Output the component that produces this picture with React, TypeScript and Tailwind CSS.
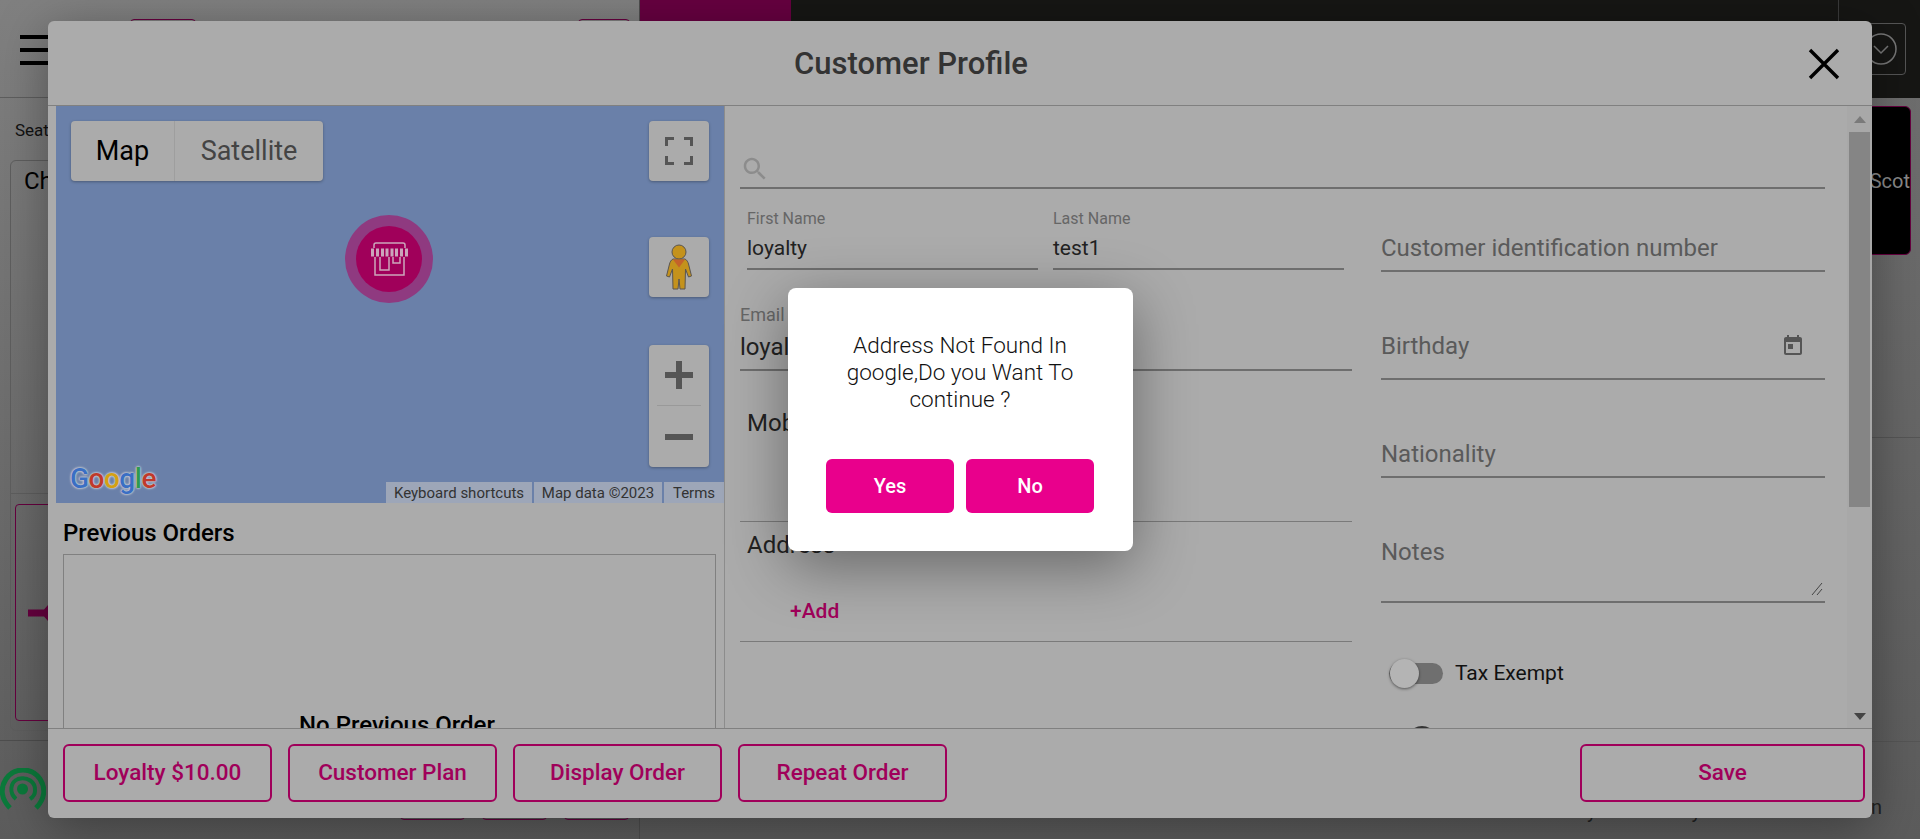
export default function App() {
  const font = { fontFamily: '"Roboto", "Liberation Sans", sans-serif' };
  return (
    <div style={font} className="relative h-[839px] w-full overflow-hidden bg-gradient-to-b from-[#808080] to-[#5c5c5c] font-['Roboto',sans-serif]">
      <Background />
      <Modal />
      <Dialog />
    </div>
  );
}

function Background() {
  return (
    <div className="flex h-full w-full">
      <div className="flex w-[639px] shrink-0 flex-col">
        <div className="flex h-[98px] shrink-0 border-b border-[#5e5e5e]">
          <div className="ml-5 mt-[35px] flex h-[30px] w-[30px] flex-col justify-between">
            <div className="h-[4px] bg-black" />
            <div className="h-[4px] bg-black" />
            <div className="h-[4px] bg-black" />
          </div>
          <div className="ml-[80px] mt-[19px] h-10 w-[66px] rounded border border-[#66003f]" />
          <div className="ml-[382px] mt-[19px] h-10 w-[52px] rounded border border-[#66003f]" />
        </div>
        <div className="shrink-0 pl-[15px] pt-[22px] text-[17px] leading-5 text-[#111]">Seat</div>
        <div className="ml-[10px] mt-[20px] flex h-[571px] w-[500px] shrink-0 flex-col rounded-md border border-[#5e5e5e]">
          <div className="h-[333px] shrink-0 border-b border-[#5e5e5e] pl-[13px] pt-[6px] text-[24px] leading-7 text-black">Ch</div>
          <div className="ml-1 mt-[10px] flex h-[217px] w-[400px] shrink-0 items-center rounded border border-[#66003f] pl-3">
            <svg width="60" height="16" viewBox="0 0 60 16" fill="#66003f">
              <path d="M0 4.5h16L20 0v16l-4-4.500H0z" />
            </svg>
          </div>
        </div>
        <div className="mt-[9px] flex flex-1 border-t border-[#4e4e4e]">
          <svg width="46" height="44" viewBox="0 0 46 44" className="mt-[27px] shrink-0" fill="none" stroke="#0b7a3b" strokeWidth="5">
            <path d="M10 40C1 31 0 20 6 11C14 -1 32 -1 40 11C46 20 45 31 36 40" />
            <path d="M16 31C9 25 10 14 18 11C27 8 36 14 35 23C35 26 33 29 30 31" strokeWidth="4" />
            <circle cx="22.500" cy="21" r="5.500" fill="#0b7a3b" stroke="none" />
          </svg>
          <div className="ml-[354px] mt-[39px] flex gap-[17px]">
            <div className="h-10 w-[65px] rounded border border-[#66003f]" />
            <div className="h-10 w-[65px] rounded border border-[#66003f]" />
            <div className="h-10 w-[65px] rounded border border-[#66003f]" />
          </div>
        </div>
      </div>
      <div className="flex min-w-0 flex-1 flex-col border-l border-[#4e4e4e] bg-gradient-to-b from-[#707070] to-[#5c5c5c]">
        <div className="flex h-[98px] shrink-0 bg-[#161614]">
          <div className="h-full w-[151px] bg-[#660040]" />
          <div className="flex-1" />
          <div className="flex h-full w-[82px] border-l border-[#3a3a3a] pl-[20px] pt-[23px]">
            <div className="flex h-[52px] w-[47px] items-center rounded border border-[#555] pl-[4px]">
              <svg width="34" height="34" viewBox="0 0 34 34" fill="none" stroke="#777" strokeWidth="1.500">
                <circle cx="17" cy="17" r="15" />
                <path d="M10 14l7 7l7-7" />
              </svg>
            </div>
          </div>
        </div>
        <div className="ml-auto mr-[9px] mt-2 flex h-[149px] w-[300px] shrink-0 items-center justify-end rounded-md border border-[#66003f] bg-black text-[20px] text-[#8a8a8a]">Scot</div>
        <div className="mt-[182px] border-t border-[#555]" />
        <div className="mt-[303px] flex h-[80px] border-t border-[#555] text-[20px] text-[#222]">
          <span className="ml-[947px] mt-[54px]">y</span>
          <span className="ml-[95px] mt-[54px]">y</span>
          <span className="ml-[170px] mt-[50px]">n</span>
        </div>
      </div>
    </div>
  );
}

function Modal() {
  return (
    <div className="absolute inset-0 flex items-center justify-center">
      <div className="flex h-[797px] w-[1824px] flex-col overflow-hidden rounded-md bg-[#ababab] shadow-[0_10px_50px_rgba(0,0,0,0.35)]">
        <div className="relative flex h-[85px] shrink-0 items-center justify-center border-b border-[#808080] pr-[98px] pt-[3px]">
          <div className="text-[31px] font-medium text-[#333]">Customer Profile</div>
          <svg className="absolute right-[31px] top-[26px]" width="34" height="34" viewBox="0 0 34 34" stroke="#000" strokeWidth="3.400" fill="none">
            <path d="M3 3L31 31M31 3L3 31" />
          </svg>
        </div>
        <div className="flex min-h-0 flex-1">
          <LeftPane />
          <Form />
          <Scrollbar />
        </div>
        <div className="flex h-[90px] shrink-0 items-start gap-4 border-t border-[#808080] pl-[15px] pr-[7px] pt-[15px]">
          <FooterButton>Loyalty $10.00</FooterButton>
          <FooterButton>Customer Plan</FooterButton>
          <FooterButton>Display Order</FooterButton>
          <FooterButton>Repeat Order</FooterButton>
          <div className="flex-1" />
          <button className="h-[58px] w-[285px] rounded-md border-2 border-[#a0005a] text-[22.500px] font-medium text-[#a0005a]">Save</button>
        </div>
      </div>
    </div>
  );
}

function FooterButton({ children }: { children: React.ReactNode }) {
  return (
    <button className="h-[58px] w-[209px] rounded-md border-2 border-[#a0005a] text-[22.500px] font-medium text-[#a0005a]">{children}</button>
  );
}

function LeftPane() {
  return (
    <div className="flex w-[677px] shrink-0 flex-col overflow-hidden border-r border-[#8c8c8c] pl-2">
      <MapView />
      <div className="shrink-0 pl-[7px] pt-[16px] text-[24px] font-medium leading-7 text-black">Previous Orders</div>
      <div className="ml-[7px] mt-[7px] flex h-[400px] w-[653px] shrink-0 justify-center border border-[#808080] pl-[15px] pt-[152px] text-[24px] font-medium text-black">
        No Previous Order
      </div>
    </div>
  );
}

function MapButton({ className, children }: { className: string; children: React.ReactNode }) {
  return (
    <div className={`absolute right-[15px] flex w-[60px] items-center justify-center rounded-sm bg-[#ababab] shadow-[0_1px_3px_rgba(0,0,0,0.3)] ${className}`}>{children}</div>
  );
}

function MapView() {
  return (
    <div className="relative h-[397px] w-full shrink-0 bg-[#6a80a9]">
      <div className="absolute left-[15px] top-[15px] flex h-[60px] w-[252px] items-stretch rounded-sm bg-[#ababab] text-[27px] shadow-[0_1px_3px_rgba(0,0,0,0.3)]">
        <div className="flex w-[104px] items-center justify-center border-r border-[#9e9e9e] text-black">Map</div>
        <div className="flex flex-1 items-center justify-center text-[#444]">Satellite</div>
      </div>
      <MapButton className="top-[15px] h-[60px]">
        <svg width="28" height="28" viewBox="0 0 28 28" fill="#555">
          <path d="M0 0h9v3H3v6H0zM19 0h9v9h-3V3h-6zM0 19h3v6h6v3H0zM25 19h3v9h-9v-3h6z" />
        </svg>
      </MapButton>
      <MapButton className="top-[131px] h-[60px]">
        <svg width="26" height="46" viewBox="0 0 26 46">
          <path d="M7 15h12c2 1 3 3 3.500 5l3 12l-3 1l-3-8l-0.500 20h-5l-1-10l-1 10h-5l-0.500-20l-3 8l-3-1l3-12c0.500-2 1.500-4 3.500-5z" fill="#c4921c" stroke="#5a5550" strokeWidth="1" strokeLinejoin="round" />
          <circle cx="13" cy="8" r="7" fill="#c4921c" stroke="#5a5550" strokeWidth="1" />
          <path d="M7 15.500h12l-6 8z" fill="#c4622a" />
        </svg>
      </MapButton>
      <MapButton className="top-[239px] h-[122px] flex-col">
        <div className="flex h-[60px] items-center">
          <svg width="28" height="28" viewBox="0 0 28 28" fill="#555">
            <path d="M11 0h6v11h11v6H17v11h-6V17H0v-6h11z" />
          </svg>
        </div>
        <div className="h-px w-[44px] bg-[#999]" />
        <div className="flex h-[61px] items-center">
          <svg width="28" height="6" viewBox="0 0 28 6" fill="#555">
            <path d="M0 0h28v6H0z" />
          </svg>
        </div>
      </MapButton>
      <div className="absolute left-[289px] top-[109px] flex h-[88px] w-[88px] items-center justify-center rounded-full bg-[#8f3a80]">
        <div className="flex h-[66px] w-[66px] items-center justify-center rounded-full bg-[#a0005a]">
          <svg width="37" height="34" viewBox="0 0 37 34" fill="none" stroke="#cba6bb" strokeWidth="1.500">
            <path d="M3 6V3c0-1 1-2 2-2h27c1 0 2 1 2 2v3" />
            <path d="M1.500 6.500v8M6.500 6.500v8M11.500 6.500v8M16 6.500v8M21 6.500v8M25.500 6.500v8M30.500 6.500v8M35.500 6.500v8" strokeWidth="3" />
            <path d="M4 15v18h29V15M9 15v13h9V15M22 15v6h7v-6" />
          </svg>
        </div>
      </div>
      <div className="absolute bottom-[6px] left-[14px] text-[28px] font-medium leading-9 tracking-[-0.500px] [text-shadow:0_0_2px_#c8ccd4,0_0_2px_#c8ccd4,0_0_3px_#c8ccd4]">
        <span className="text-[#3a6fc4]">G</span><span className="text-[#c0392b]">o</span><span className="text-[#d4a013]">o</span><span className="text-[#3a6fc4]">g</span><span className="text-[#2e9a4f]">l</span><span className="text-[#c0392b]">e</span>
      </div>
      <div className="absolute bottom-0 right-0 flex h-[21px] gap-[2px] text-[15px] leading-[22px] text-[#333]">
        <div className="w-[146px] bg-[#9da6b8] text-center">Keyboard shortcuts</div>
        <div className="w-[128px] bg-[#9da6b8] text-center">Map data ©2023</div>
        <div className="w-[60px] bg-[#9da6b8] text-center">Terms</div>
      </div>
    </div>
  );
}

function Underlined({ className, labelClass, valueClass, label, value }: { className: string; labelClass: string; valueClass: string; label: string; value: string }) {
  return (
    <div className={`flex shrink-0 flex-col justify-end border-b-2 border-[#6e6e6e] ${className}`}>
      <div className={`text-[#666] ${labelClass}`}>{label}</div>
      <div className={`text-[#222] ${valueClass}`}>{value}</div>
    </div>
  );
}

function Placeholder({ className, children }: { className: string; children: React.ReactNode }) {
  return (
    <div className={`flex shrink-0 items-center justify-between border-b-2 border-[#6e6e6e] text-[24px] text-[#5a5a5a] ${className}`}>{children}</div>
  );
}

function Form() {
  return (
    <div className="min-w-0 flex-1 overflow-hidden pl-[15px]">
      <div className="flex w-[1085px] flex-col">
        <div className="mt-[37px] flex h-[46px] shrink-0 items-center border-b-2 border-[#6e6e6e] pt-[7px]">
          <svg width="30" height="30" viewBox="0 0 24 24" fill="#8c8c8c">
            <path d="M15.500 14h-.79l-.28-.27C15.410 12.590 16 11.110 16 9.500 16 5.910 13.090 3 9.500 3S3 5.910 3 9.500 5.910 16 9.500 16c1.610 0 3.090-.59 4.230-1.570l.27.28v.79l5 4.990L20.490 19l-4.990-5zm-6 0C7.010 14 5 11.990 5 9.500S7.010 5 9.500 5 14 7.010 14 9.500 11.990 14 9.500 14z" />
          </svg>
        </div>
        <div className="flex">
          <div className="flex w-[612px] shrink-0 flex-col">
            <div className="flex gap-[15px] pl-[7px]">
              <Underlined className="mt-[19px] h-[62px] w-[291px]" labelClass="text-[16px] leading-5" valueClass="text-[21px] leading-[39px]" label="First Name" value="loyalty" />
              <Underlined className="mt-[19px] h-[62px] w-[291px]" labelClass="text-[16px] leading-5" valueClass="text-[21px] leading-[39px]" label="Last Name" value="test1" />
            </div>
            <Underlined className="mt-[35px] h-[66px] pb-[1px]" labelClass="text-[18px] leading-6" valueClass="text-[24px] leading-[41px]" label="Email" value="loyalty.test1@gmail.com" />
            <div className="flex h-[151px] shrink-0 flex-col border-b border-[#7a7a7a] pl-[7px] pt-[38px] text-[24px] leading-7 text-[#222]">Mobile</div>
            <div className="flex h-[120px] shrink-0 flex-col border-b border-[#7a7a7a] pl-[7px] pt-[9px] text-[24px] leading-7 text-[#222]">
              Address
              <span className="ml-[43px] mt-[38px] text-[21px] font-medium leading-7 text-[#a0005a]">+Add</span>
            </div>
          </div>
          <div className="ml-[29px] flex min-w-0 flex-1 flex-col">
            <Placeholder className="mt-[41px] h-[42px] pb-[4px]">Customer identification number</Placeholder>
            <Placeholder className="mt-[48px] h-[60px] pb-[6px] pr-[20px]">
              Birthday
              <svg width="24" height="24" viewBox="0 0 24 24" fill="#555">
                <path d="M19 3h-1V1h-2v2H8V1H6v2H5c-1.110 0-1.990.9-1.990 2L3 19c0 1.100.89 2 2 2h14c1.100 0 2-.9 2-2V5c0-1.100-.9-2-2-2zm0 16H5V8h14v11zM7 10h5v5H7z" />
              </svg>
            </Placeholder>
            <Placeholder className="mt-[48px] h-[50px] pt-[3px]">Nationality</Placeholder>
            <div className="relative mt-[46px] h-[79px] shrink-0 border-b-2 border-[#6e6e6e] pt-[14px] text-[24px] leading-7 text-[#5a5a5a]">
              Notes
              <svg className="absolute bottom-[5px] right-[2px]" width="12" height="14" viewBox="0 0 12 14" stroke="#444" fill="none">
                <path d="M1 13L11 1M6 13L11 7" />
              </svg>
            </div>
            <div className="mt-[58px] flex items-center">
              <div className="relative ml-[8px] h-[21px] w-[54px] rounded-full bg-[#6f6f6f]">
                <div className="absolute left-[1px] -top-[4px] h-[29px] w-[29px] rounded-full bg-[#b4b4b4] shadow-[0_1px_3px_rgba(0,0,0,0.5)]" />
              </div>
              <span className="ml-[12px] text-[21px] leading-6 text-[#111]">Tax Exempt</span>
            </div>
            <div className="ml-[26px] mt-[41px] h-[30px] w-[30px] shrink-0 rounded-full bg-[#333]" />
          </div>
        </div>
      </div>
    </div>
  );
}

function Scrollbar() {
  return (
    <div className="flex w-[25px] shrink-0 flex-col items-center bg-[#a8a8a8]">
      <div className="flex h-[26px] shrink-0 items-center">
        <div className="h-0 w-0 border-x-[6px] border-b-[7px] border-x-transparent border-b-[#7a7a7a]" />
      </div>
      <div className="h-[375px] w-[21px] shrink-0 bg-[#858585]" />
      <div className="flex-1" />
      <div className="mb-[8px] h-0 w-0 border-x-[6px] border-t-[7px] border-x-transparent border-t-[#444]" />
    </div>
  );
}

function Dialog() {
  return (
    <div className="absolute inset-0 flex items-center justify-center">
      <div className="flex h-[263px] w-[345px] flex-col items-center rounded-lg bg-white shadow-[0_15px_60px_rgba(0,0,0,0.4)]">
        <div className="mt-[44px] w-[270px] text-center text-[22.500px] font-light leading-[27px] text-[#111]">
          Address Not Found In google,Do you Want To continue ?
        </div>
        <div className="mt-[46px] flex gap-[12px]">
          <button className="h-[54px] w-[128px] rounded-md bg-[#e9008c] text-[20px] font-medium text-white">Yes</button>
          <button className="h-[54px] w-[128px] rounded-md bg-[#e9008c] text-[20px] font-medium text-white">No</button>
        </div>
      </div>
    </div>
  );
}
